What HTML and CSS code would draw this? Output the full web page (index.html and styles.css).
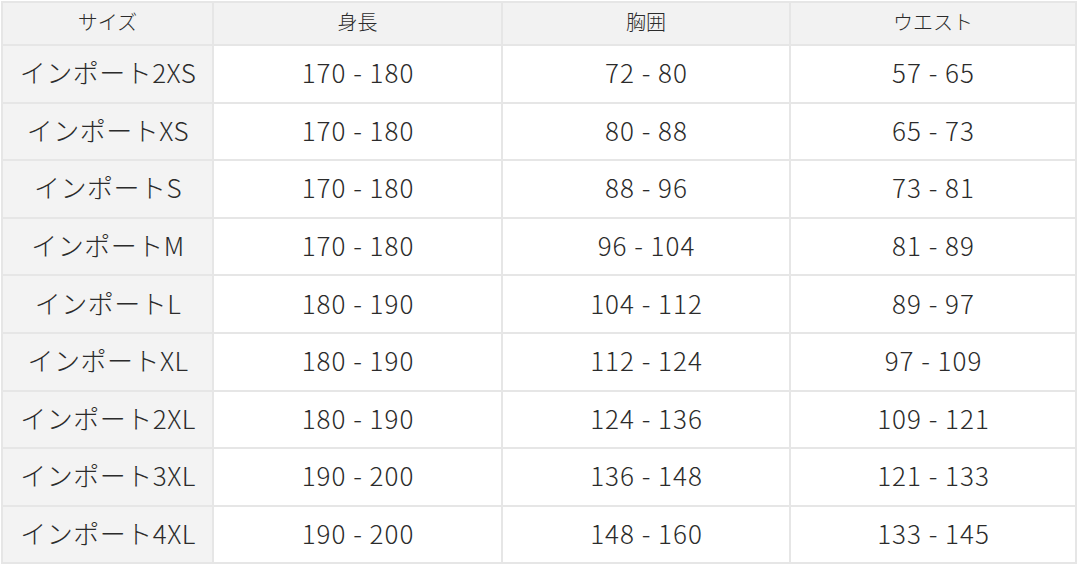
FILE: index.html
```html
<!DOCTYPE html>
<html lang="ja">
<head>
<meta charset="utf-8">
<link rel="stylesheet" href="styles.css">
</head>
<body>
<div class="table">
  <div class="cell head">サイズ</div>
  <div class="cell head">身長</div>
  <div class="cell head">胸囲</div>
  <div class="cell head">ウエスト</div>

  <div class="cell size">インポート2XS</div><div class="cell num">170 - 180</div><div class="cell num">72 - 80</div><div class="cell num">57 - 65</div>
  <div class="cell size">インポートXS</div><div class="cell num">170 - 180</div><div class="cell num">80 - 88</div><div class="cell num">65 - 73</div>
  <div class="cell size">インポートS</div><div class="cell num">170 - 180</div><div class="cell num">88 - 96</div><div class="cell num">73 - 81</div>
  <div class="cell size">インポートM</div><div class="cell num">170 - 180</div><div class="cell num">96 - 104</div><div class="cell num">81 - 89</div>
  <div class="cell size">インポートL</div><div class="cell num">180 - 190</div><div class="cell num">104 - 112</div><div class="cell num">89 - 97</div>
  <div class="cell size">インポートXL</div><div class="cell num">180 - 190</div><div class="cell num">112 - 124</div><div class="cell num">97 - 109</div>
  <div class="cell size">インポート2XL</div><div class="cell num">180 - 190</div><div class="cell num">124 - 136</div><div class="cell num">109 - 121</div>
  <div class="cell size">インポート3XL</div><div class="cell num">190 - 200</div><div class="cell num">136 - 148</div><div class="cell num">121 - 133</div>
  <div class="cell size">インポート4XL</div><div class="cell num">190 - 200</div><div class="cell num">148 - 160</div><div class="cell num">133 - 145</div>
</div>
</body>
</html>
```
FILE: styles.css
```css
html, body {
  margin: 0;
  padding: 0;
  background: #ffffff;
}
body {
  padding: 1px 0 0 1px;
  font-family: "Noto Sans CJK JP", "Noto Sans", sans-serif;
  font-weight: 300;
  color: #2b2b2b;
}
.table {
  display: grid;
  grid-template-columns: 209px 287px 286px 284px;
  grid-template-rows: 41px repeat(9, 55.6px);
  gap: 2px;
  padding: 2px;
  background: #e6e6e6;
  width: max-content;
}
.cell {
  background: #ffffff;
  display: flex;
  align-items: center;
  justify-content: center;
  font-size: 26px;
  line-height: 1;
  white-space: nowrap;
  padding-bottom: 3px;
}
.num {
  letter-spacing: 1px;
  padding-left: 1px;
}
.head {
  background: #f2f2f2;
  font-size: 20px;
  padding-bottom: 3px;
}
.size {
  background: #f3f3f3;
  letter-spacing: 0.5px;
  padding-left: 1px;
}
```
